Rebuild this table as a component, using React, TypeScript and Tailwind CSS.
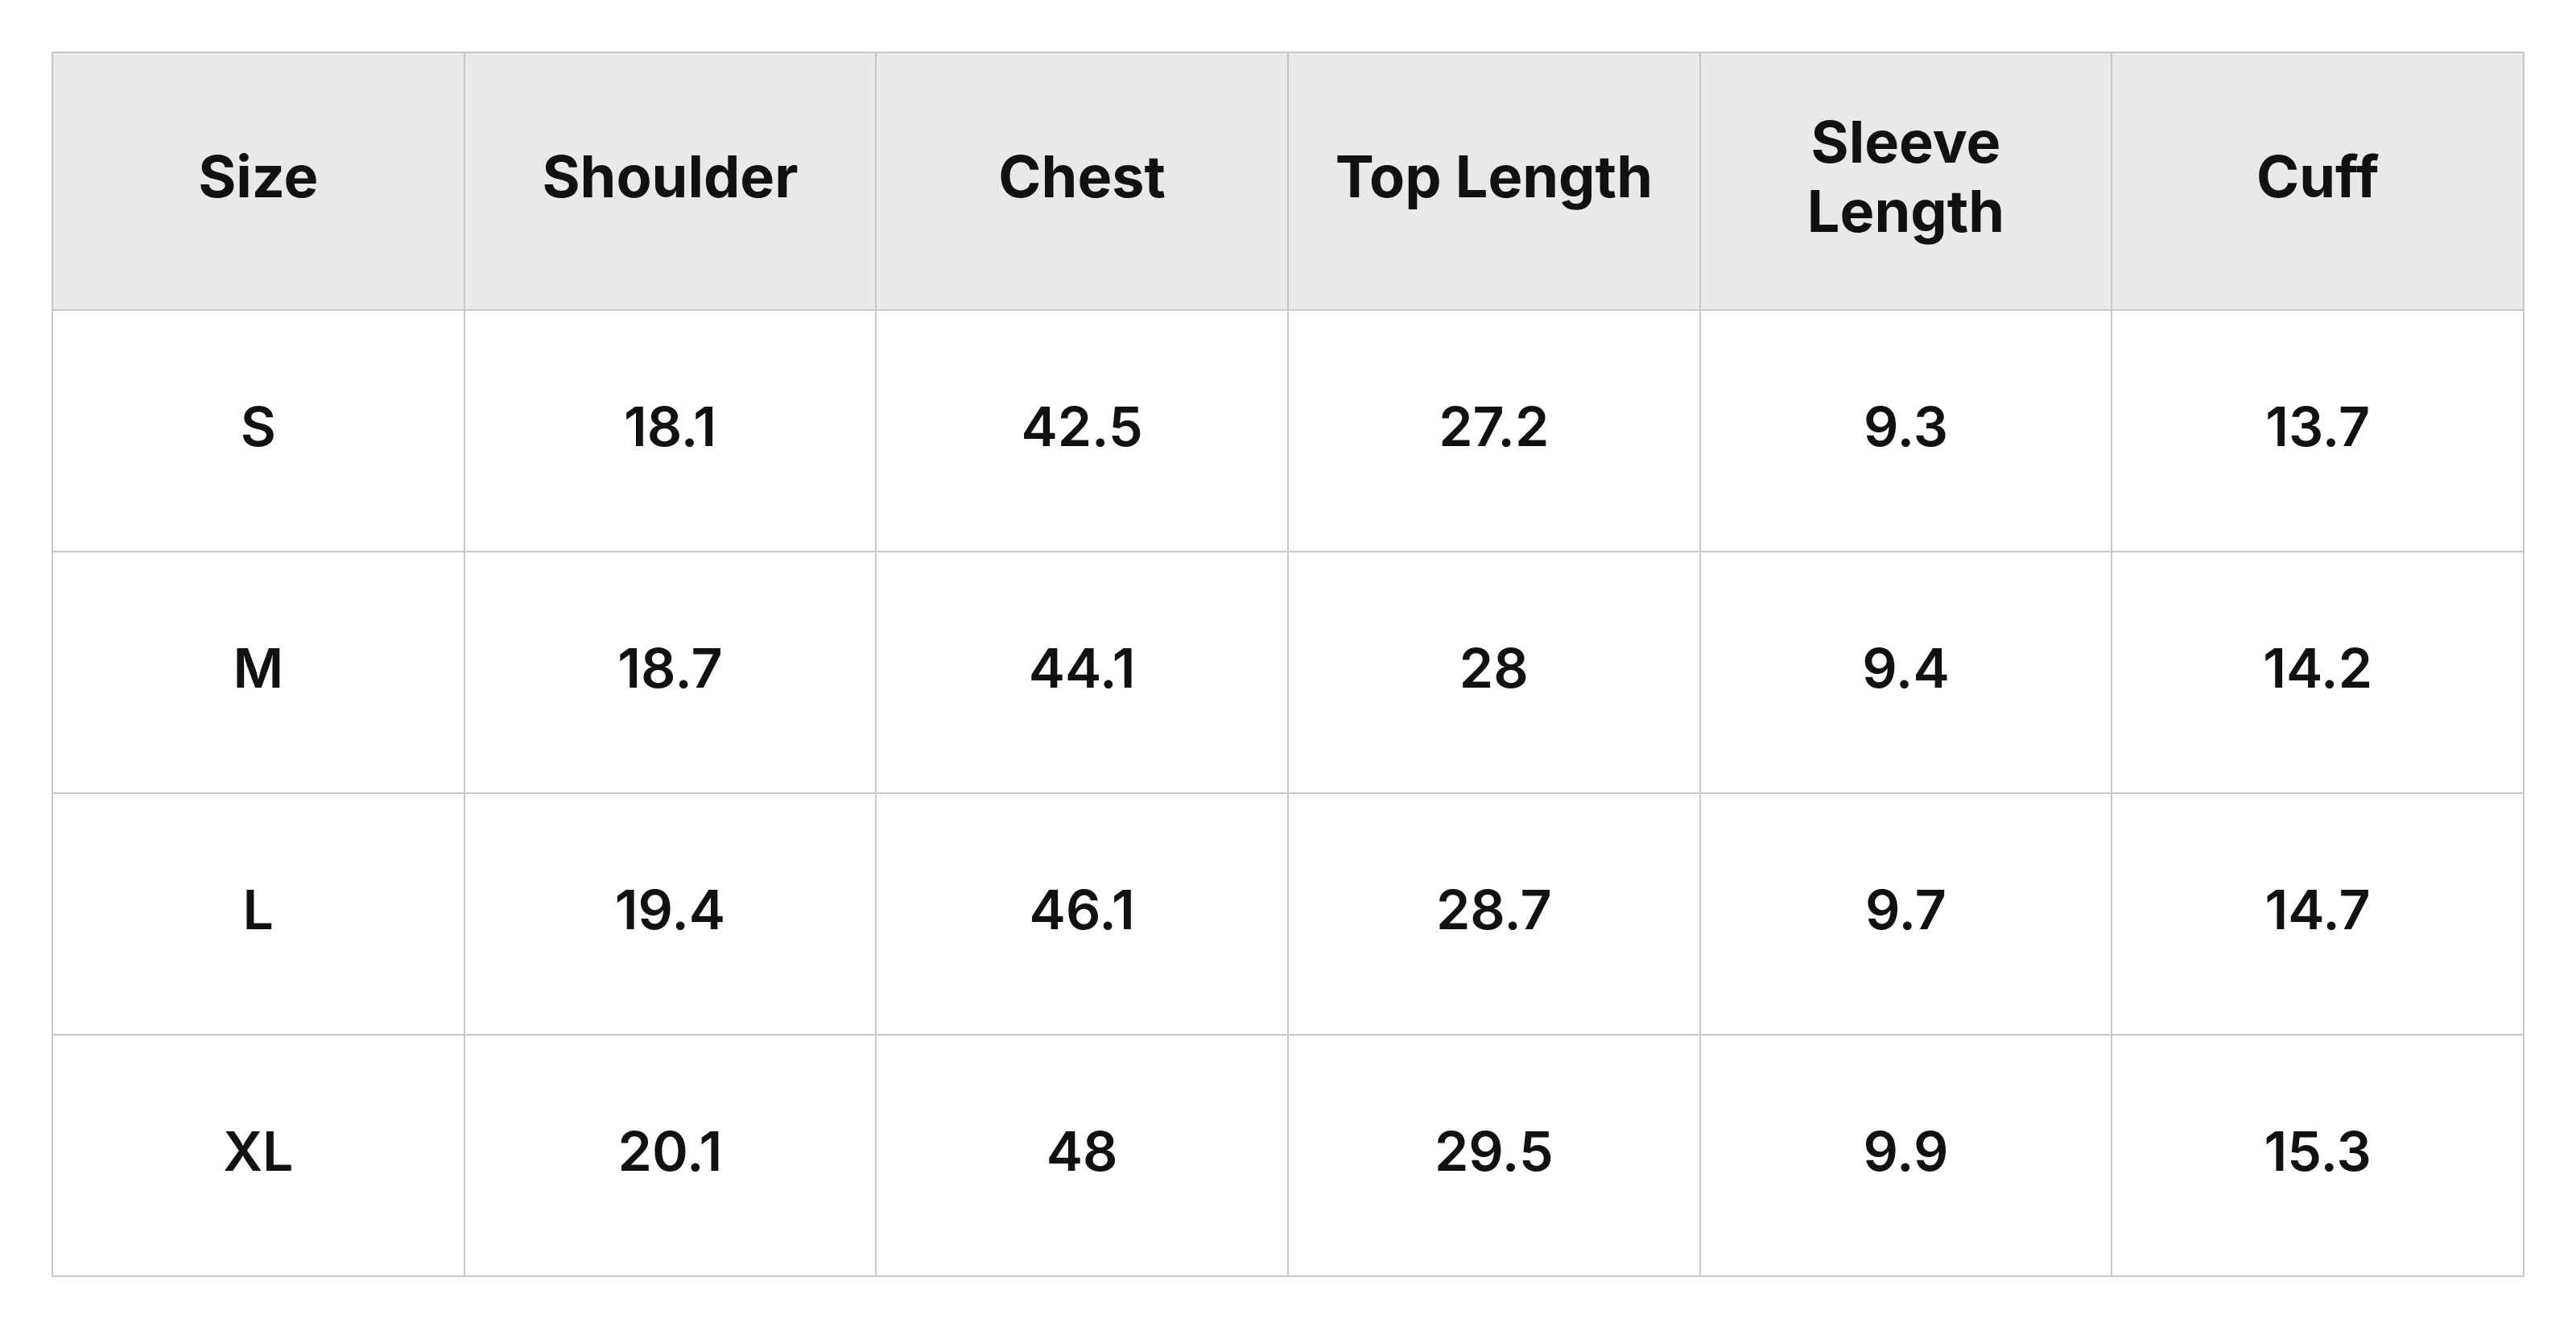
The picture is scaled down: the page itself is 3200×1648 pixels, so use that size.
const headers = ["Size", "Shoulder", "Chest", "Top Length", "Sleeve Length", "Cuff"];

const rows = [
  ["S", "18.1", "42.5", "27.2", "9.3", "13.7"],
  ["M", "18.7", "44.1", "28", "9.4", "14.2"],
  ["L", "19.4", "46.1", "28.7", "9.7", "14.7"],
  ["XL", "20.1", "48", "29.5", "9.9", "15.3"],
];

export default function App() {
  return (
    <div className="bg-white p-16 font-['Inter','Liberation_Sans',sans-serif] text-[#111111]">
      <table className="w-full table-fixed border-collapse">
        <thead>
          <tr className="h-[320px] bg-[#e9e9e9]">
            {headers.map((h) => (
              <th
                key={h}
                className="border-2 border-[#c8c8c8] px-14 pb-3 text-center align-middle text-[72px] font-bold leading-[1.2]"
              >
                {h}
              </th>
            ))}
          </tr>
        </thead>
        <tbody>
          {rows.map((row) => (
            <tr key={row[0]} className="h-[300px]">
              {row.map((cell, i) => (
                <td
                  key={i}
                  className="border-2 border-[#c8c8c8] pb-3 text-center align-middle text-[68px] font-semibold"
                >
                  {cell}
                </td>
              ))}
            </tr>
          ))}
        </tbody>
      </table>
    </div>
  );
}
